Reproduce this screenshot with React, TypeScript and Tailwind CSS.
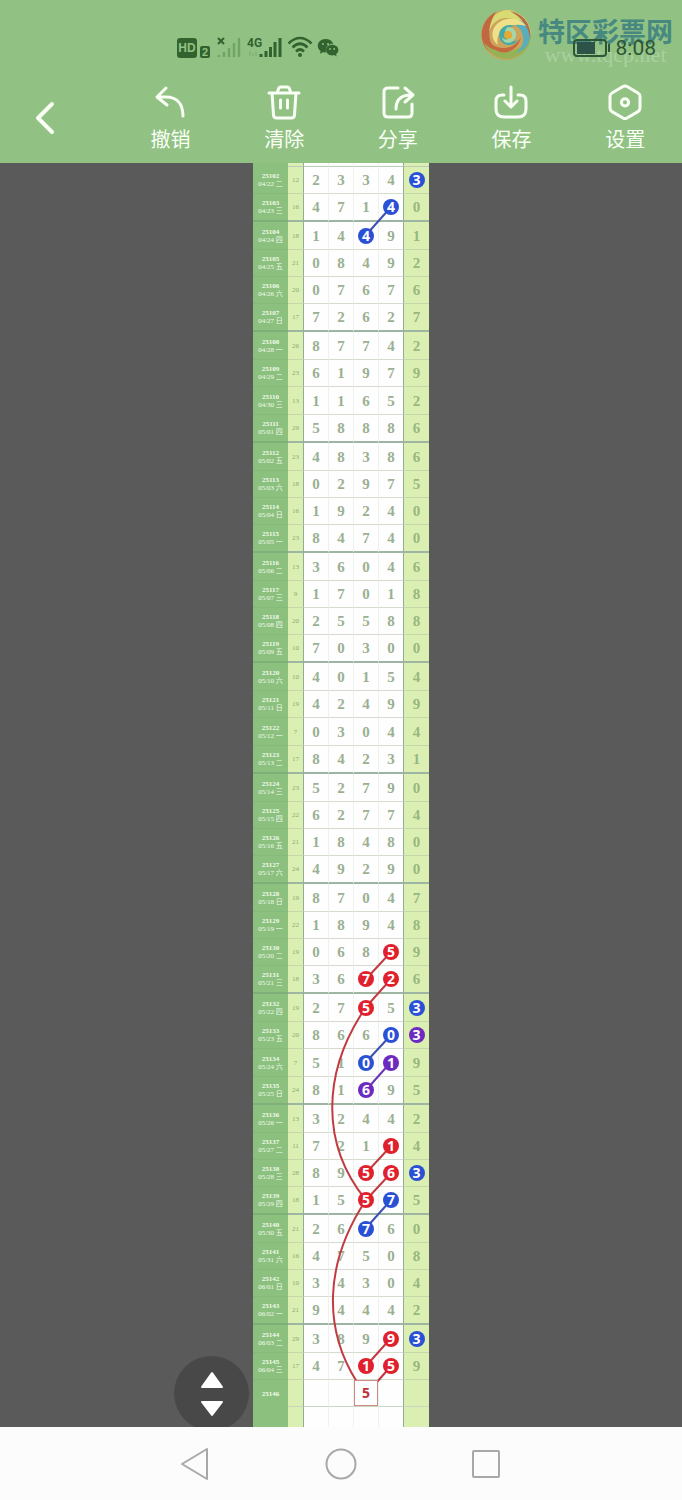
import React from "react";

type Color = "blue" | "red" | "purple";

const DRAWS = [
  "23343", "47140", "14491", "08492", "07676", "72627",
  "87742", "61979", "11652", "58886",
  "48386", "02975", "19240", "84740",
  "36046", "17018", "25588", "70300",
  "40154", "42499", "03044", "84231",
  "52790", "62774", "18480", "49290",
  "87047", "18948", "06859", "36726",
  "27553", "86603", "51019", "81695",
  "32442", "72114", "89563", "15575",
  "26760", "47508", "34304", "94442",
  "38993", "47159",
];

const WEEKDAYS = ["日", "一", "二", "三", "四", "五", "六"];

const MARKS: Record<string, Color> = {
  "0-4": "blue", "1-3": "blue", "2-2": "blue",
  "28-3": "red", "29-2": "red", "29-3": "red", "30-2": "red", "30-4": "blue",
  "31-3": "blue", "31-4": "purple", "32-2": "blue", "32-3": "purple", "33-2": "purple",
  "35-3": "red", "36-2": "red", "36-3": "red", "36-4": "blue",
  "37-2": "red", "37-3": "blue", "38-2": "blue",
  "42-3": "red", "42-4": "blue", "43-2": "red", "43-3": "red",
};

const MARK_BG: Record<Color, string> = {
  blue: "bg-[#2a50d6]",
  red: "bg-[#e0202c]",
  purple: "bg-[#6c2abf]",
};

const STROKE: Record<Color, string> = {
  blue: "#3b50b0",
  red: "#c23a42",
  purple: "#6a35b0",
};

const isGroupEnd = (i: number) => i % 4 === 1;

function isTall(i: number) {
  if (i < 1) return false;
  if (i % 4 === 1 || i % 4 === 2) return true;
  return i % 12 === 8;
}

const ROW_CENTERS: number[] = [];
DRAWS.reduce((y, _, i) => {
  const h = isTall(i) ? 28 : 27;
  ROW_CENTERS.push(y + 13);
  return y + h;
}, 4);
const DRAWS_END = ROW_CENTERS[ROW_CENTERS.length - 1] + 14;

const COL_X = [63, 88, 113, 138, 163];

const LINKS: { from: [number, number]; to: [number, number]; color: Color }[] = [
  { from: [1, 3], to: [2, 2], color: "blue" },
  { from: [28, 3], to: [29, 2], color: "red" },
  { from: [29, 3], to: [30, 2], color: "red" },
  { from: [31, 3], to: [32, 2], color: "blue" },
  { from: [32, 3], to: [33, 2], color: "purple" },
  { from: [35, 3], to: [36, 2], color: "red" },
  { from: [36, 3], to: [37, 2], color: "red" },
  { from: [37, 3], to: [38, 2], color: "blue" },
  { from: [42, 3], to: [43, 2], color: "red" },
];

function dateOf(i: number) {
  const d = new Date(2025, 3, 22 + i);
  const mm = String(d.getMonth() + 1).padStart(2, "0");
  const dd = String(d.getDate()).padStart(2, "0");
  return `${mm}/${dd} ${WEEKDAYS[d.getDay()]}`;
}

const LABEL = "w-[35px] bg-[#8cc07f] p-0 text-center text-[7px] leading-[8px] font-normal text-[#f1fbe9]";
const SUM = "w-[15px] bg-[#dcefb2] p-0 text-center text-[7px] leading-[8px] text-[#86ac72]";

function numCell(col: number) {
  if (col === 0) return "w-[26px] border-l border-l-[#8fae93] bg-[#fdfefd]";
  if (col === 3) return "w-[25px] border-r border-r-[#8fae93] bg-[#fdfefd]";
  if (col === 4) return "w-[25px] bg-[#dcefb2]";
  return "w-[25px] bg-[#fdfefd]";
}

function DrawRow({ draw, index }: { draw: string; index: number }) {
  const h = isTall(index) ? "h-[28px]" : "h-[27px]";
  const line = isGroupEnd(index) ? "border-b-2 border-b-[#9fb5a3]" : "border-b border-b-[#d3dccf]";
  const tinted = isGroupEnd(index) ? "border-b-2 border-b-[#9fb5a3]" : "border-b border-b-[#c6d8aa]";
  const labelLine = isGroupEnd(index) ? "border-b-2 border-b-[#7fae78]" : "border-b border-b-[#86ba7a]";
  const digits = draw.split("");
  const sum = digits.slice(0, 4).reduce((a, b) => a + Number(b), 0);
  return (
    <tr>
      <th scope="row" className={`${h} ${LABEL} ${labelLine}`}>
        <span className="block font-bold">{25102 + index}</span>
        <span className="block whitespace-nowrap">{dateOf(index)}</span>
      </th>
      <td className={`${SUM} ${tinted}`}>{sum}</td>
      {digits.map((d, c) => {
        const mark = MARKS[`${index}-${c}`];
        const split = c < 3 ? "border-r border-r-[#eef2ec]" : "";
        return (
          <td key={c} className={`p-0 text-center ${split} ${numCell(c)} ${c === 4 ? tinted : line}`}>
            {mark ? (
              <span
                className={`relative z-10 mx-auto flex size-4 items-center justify-center rounded-full font-['Open_Sans','Noto_Sans',sans-serif] text-sm leading-4 font-bold text-white ${MARK_BG[mark]}`}
              >
                {d}
              </span>
            ) : (
              <span className={`block font-['Liberation_Serif',serif] text-[15px] leading-4 font-bold ${c === 4 ? "text-[#97b781]" : "text-[#9bb092]"}`}>
                {d}
              </span>
            )}
          </td>
        );
      })}
    </tr>
  );
}

function BlankCells({ line, value }: { line: string; value?: string }) {
  return (
    <>
      <td className={`${SUM} ${line}`} />
      {[0, 1, 2, 3, 4].map((c) => (
        <td key={c} className={`p-0 text-center ${c < 3 ? "border-r border-r-[#eef2ec]" : ""} ${numCell(c)} ${line}`}>
          {value && c === 2 && (
            <span className="relative z-10 flex h-[26px] items-center justify-center border border-[#cf8a84] bg-[#fdfefd] font-['Open_Sans','Noto_Sans',sans-serif] text-sm font-bold text-[#c0303c]">
              {value}
            </span>
          )}
        </td>
      ))}
    </>
  );
}

function Chart() {
  const a = ROW_CENTERS[30];
  const b = ROW_CENTERS[37];
  return (
    <div className="relative mx-auto w-[176px] font-['Liberation_Serif','Noto_Sans_CJK_SC',serif]">
      <table className="w-full table-fixed border-separate border-spacing-0">
        <colgroup>
          <col className="w-[35px]" />
          <col className="w-[15px]" />
          <col className="w-[26px]" />
          <col className="w-[25px]" />
          <col className="w-[25px]" />
          <col className="w-[25px]" />
          <col className="w-[25px]" />
        </colgroup>
        <tbody>
          <tr>
            <th className={`h-1 ${LABEL}`} />
            <BlankCells line="border-b border-b-[#bccbb8]" />
          </tr>
          {DRAWS.map((d, i) => (
            <DrawRow key={i} draw={d} index={i} />
          ))}
          <tr>
            <th scope="row" className={`h-[27px] ${LABEL}`}>
              <span className="block font-bold">25146</span>
            </th>
            <BlankCells line="border-b border-b-[#c9d6c0]" value="5" />
          </tr>
          <tr>
            <th className={`h-5 ${LABEL}`} />
            <BlankCells line="" />
          </tr>
        </tbody>
      </table>
      <svg className="pointer-events-none absolute inset-0 h-full w-full" fill="none" strokeWidth="2" aria-hidden="true">
        {LINKS.map(({ from, to, color }, i) => (
          <line
            key={i}
            x1={COL_X[from[1]]}
            y1={ROW_CENTERS[from[0]]}
            x2={COL_X[to[1]]}
            y2={ROW_CENTERS[to[0]]}
            stroke={STROKE[color]}
          />
        ))}
        <line x1={COL_X[3]} y1={ROW_CENTERS[43]} x2="124" y2={DRAWS_END + 2} stroke={STROKE.red} />
        <path d={`M113 ${a}C68 ${a + 66} 68 ${b - 55} 113 ${b}`} stroke={STROKE.red} />
        <path d={`M113 ${b}C70 ${b + 65} 71 ${DRAWS_END - 50} 104 ${DRAWS_END + 2}`} stroke={STROKE.red} />
      </svg>
    </div>
  );
}

function StatusBar() {
  return (
    <div className="relative flex h-[72px] items-start justify-between pr-[26px] pl-[177px] text-[#32632f]">
      <div className="mt-[36px] flex items-end">
        <span className="flex h-5 w-5 items-center justify-center rounded-[3px] bg-[#32632f] font-['Liberation_Sans',sans-serif] text-xs font-bold text-[#91c284]">HD</span>
        <span className="ml-[3px] flex h-3 w-[10px] items-center justify-center rounded-[2px] bg-[#32632f] font-['Liberation_Sans',sans-serif] text-[11px] font-bold text-[#91c284]">2</span>
        <svg className="ml-[6px]" width="25" height="22" viewBox="0 0 25 22" aria-hidden="true">
          <path d="M2 2l6 6M8 2l-6 6" stroke="#32632f" strokeWidth="2" />
          <path d="M3 21v-2M8 21v-5M13 21v-9M18 21v-14M23 21V2" stroke="#6fa465" strokeWidth="2.4" />
        </svg>
        <svg className="ml-[6px]" width="36" height="22" viewBox="0 0 36 22" aria-hidden="true">
          <text x="0" y="11" fontSize="12" fontWeight="700" fontFamily="Roboto, sans-serif" fill="#32632f">4G</text>
          <path d="M3 20v-5M6 20v-3M9 20v-5" stroke="#7fb274" strokeWidth="1.5" />
          <path d="M14 21v-3M19 21v-6M23.500 21v-10M28 21v-15M33 21V2" stroke="#32632f" strokeWidth="3" />
        </svg>
        <svg className="ml-1" width="26" height="22" viewBox="0 0 26 22" fill="none" stroke="#32632f" strokeWidth="2.600" aria-hidden="true">
          <path d="M1.500 7.500Q13-3.500 24.500 7.500M5.500 11.500Q13 4 20.500 11.500M9 15.500Q13 11.500 17 15.500" />
          <circle cx="13" cy="19" r="2" fill="#32632f" stroke="none" />
        </svg>
        <svg className="ml-[4px]" width="22" height="20" viewBox="0 0 22 20" aria-hidden="true">
          <path d="M8.500 1C4 1 .8 4 .8 7.800c0 2.200 1 4 2.800 5.300l-.6 2.600 3-1.500 3 .4C8 8 12 5.500 16.300 5.700 15.200 2.800 12.300 1 8.500 1Z" fill="#32632f" />
          <path d="M15.200 6.800c-3.600 0-6.200 2.300-6.200 5.300s2.600 5.300 6.200 5.300l2-.3 2.500 1.400-.6-2.200c1.400-1 2.300-2.500 2.300-4.200 0-3-2.600-5.300-6.200-5.300Z" fill="#32632f" />
          <g fill="#91c284">
            <circle cx="6" cy="6" r="1" />
            <circle cx="11" cy="6" r="1" />
            <circle cx="13" cy="11" r=".9" />
            <circle cx="17.200" cy="11" r=".9" />
          </g>
        </svg>
      </div>

      <div className="absolute top-[9px] right-[9px] flex">
        <svg width="52" height="52" viewBox="0 0 52 52" aria-hidden="true">
          <circle cx="26" cy="26" r="25" fill="#cda45c" />
          <path d="M26 1A25 25 0 0 1 51 26C46 14 36 8 25 9S8 20 8 29C4 17 12 3 26 1Z" fill="#d8da72" />
          <path d="M16 3C4 9-2 23 4 36c4 8 12 11 19 9C9 41 4 22 16 3Z" fill="#bf6842" />
          <path d="M4 34c5 13 20 20 34 13 8-4 12-11 13-19-7 13-31 22-47 6Z" fill="#96b256" />
          <path d="M9 32c7 10 25 10 32-4-3 16-24 23-32 4Z" fill="#c4683f" />
          <path d="M50 21c2 12-5 21-14 23 8-7 10-17 3-25-4-4-10-5-14-3C33 7 46 10 50 21Z" fill="#59aebb" />
          <path d="M46 17C40 8 27 7 18 14 10 21 11 31 18 36 14 24 28 12 46 17Z" fill="#efe08a" />
          <path d="M35 17c-11-4-20 6-14 15 4 6 13 5 17-1-7 3-13 0-13-6 0-4 4-8 10-8Z" fill="#45aaa7" />
          <path d="M28 18c8 0 11 9 5 14-5 4-11 1-11-4 3 5 10 2 9-3-1-3-4-3-6-1 0-3 1-5 3-6Z" fill="#a4d6ab" />
          <circle cx="28" cy="26" r="4" fill="#e2a934" />
          <path d="M30 2c14 3 22 14 20 28-1-13-9-22-20-28Z" fill="#b56b45" />
        </svg>
        <div className="ml-[6px] mt-[6px]">
          <div className="font-['Noto_Sans_CJK_SC',sans-serif] text-[27px] leading-[32px] font-bold whitespace-nowrap text-[#478980]">特区彩票网</div>
          <div className="text-center font-['Liberation_Serif',serif] text-[22px] leading-4 whitespace-nowrap text-[#a9d09e]">www.tqcp.net</div>
        </div>
      </div>

      <div className="relative mt-[38px] flex items-center gap-[5px]">
        <svg width="38" height="20" viewBox="0 0 38 20" aria-hidden="true">
          <rect x="1" y="2" width="32" height="16" rx="3" fill="none" stroke="#2d5637" strokeWidth="2" />
          <rect x="4" y="4" width="18" height="12" fill="#2d5349" />
          <rect x="35" y="6" width="2" height="8" fill="#2d5637" />
        </svg>
        <span className="font-['Roboto',sans-serif] text-[21px] leading-5 text-[#2d5532]">8:08</span>
      </div>
    </div>
  );
}

const TOOLS: { label: string; icon: React.ReactNode }[] = [
  {
    label: "撤销",
    icon: <path d="M14 4L5 13l10 8M5.500 13H14c11 0 17 7 17 19" />,
  },
  {
    label: "清除",
    icon: <path d="M3 9h30M11 9l1.500-4Q13 3 15 3h6q2 0 2.500 2L25 9M6 9l1.500 22q.3 3 3 3h15q2.700 0 3-3L30 9M14.500 16v8M21.500 16v8" />,
  },
  {
    label: "分享",
    icon: <path d="M18 4H8Q4 4 4 8v21q0 4 4 4h20q4 0 4-4v-9M25 4l8 7-8 7M32 11h-3Q16 12 16 25" />,
  },
  {
    label: "保存",
    icon: <path d="M11 11H9q-6 0-6 6v8q0 8 8 8h14q8 0 8-8v-8q0-6-6-6h-2M18 3v19M12 17l6 6 6-6" />,
  },
  {
    label: "设置",
    icon: (
      <>
        <path d="M16 2.500q2-1.200 4 0l11 6.500q2 1.200 2 3.500v11.600q0 2.300-2 3.500L20 34q-2 1.200-4 0L5 27.600q-2-1.200-2-3.500V12.500q0-2.300 2-3.500Z" />
        <circle cx="18" cy="18.300" r="3.600" />
      </>
    ),
  },
];

function Toolbar() {
  return (
    <div className="grid h-[91px] grid-cols-6 text-[#fafff5]">
      <button type="button" aria-label="返回" className="flex items-center justify-center pr-6">
        <svg width="24" height="36" viewBox="0 0 24 36" fill="none" stroke="currentColor" strokeWidth="4" strokeLinecap="round" strokeLinejoin="round">
          <path d="M19 4L5 18l14 14" />
        </svg>
      </button>
      {TOOLS.map((t) => (
        <button type="button" key={t.label} className="flex flex-col items-center pt-3">
          <svg width="36" height="36" viewBox="0 0 36 36" fill="none" stroke="currentColor" strokeWidth="3" strokeLinecap="round" strokeLinejoin="round" aria-hidden="true">
            {t.icon}
          </svg>
          <span className="mt-[7px] font-['Noto_Sans_CJK_SC',sans-serif] text-xl leading-6">{t.label}</span>
        </button>
      ))}
    </div>
  );
}

export default function App() {
  return (
    <div className="flex min-h-screen flex-col bg-[#5a5a5a]">
      <header className="bg-[#91c284]">
        <StatusBar />
        <Toolbar />
      </header>
      <main className="relative grow overflow-hidden">
        <Chart />
        <button
          type="button"
          aria-label="滚动"
          className="absolute -bottom-1 left-1/2 -ml-[167px] flex size-[75px] items-center justify-center rounded-full bg-[#484848]"
        >
          <svg width="28" height="46" viewBox="0 0 28 46" fill="#fff" stroke="#fff" strokeWidth="2" strokeLinejoin="round" aria-hidden="true">
            <path d="M14 2L24 16H4ZM14 44L24 31H4Z" />
          </svg>
        </button>
      </main>
      <nav className="flex h-[73px] items-center justify-center bg-[#fcfcfc] text-[#a8a8a8]">
        <button type="button" aria-label="后退" className="flex w-[145px] justify-center">
          <svg width="32" height="34" viewBox="0 0 32 34" fill="none" stroke="currentColor" strokeWidth="2" strokeLinejoin="round">
            <path d="M27 2v30L2 17Z" />
          </svg>
        </button>
        <button type="button" aria-label="主页" className="flex w-[145px] justify-center">
          <svg width="34" height="34" viewBox="0 0 34 34" fill="none" stroke="currentColor" strokeWidth="2">
            <circle cx="17" cy="17" r="14.500" />
          </svg>
        </button>
        <button type="button" aria-label="最近任务" className="flex w-[145px] justify-center">
          <svg width="30" height="30" viewBox="0 0 30 30" fill="none" stroke="currentColor" strokeWidth="2">
            <rect x="2" y="2" width="26" height="26" rx="1" />
          </svg>
        </button>
      </nav>
    </div>
  );
}
